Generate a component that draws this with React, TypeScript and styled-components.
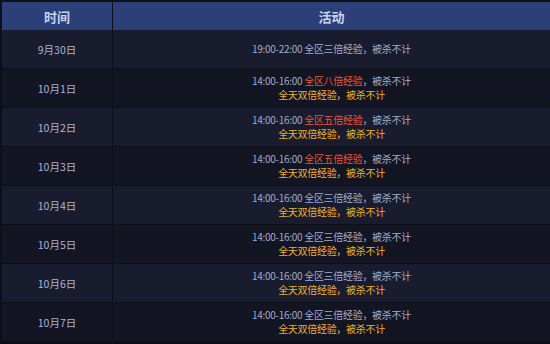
import React from 'react';
import styled, { createGlobalStyle } from 'styled-components';

interface IEvent {
  date: string;
  time: string;
  highlight: string;
  hot?: boolean;
  allDay?: boolean;
}

const EVENTS: IEvent[] = [
  { date: '9月30日', time: '19:00-22:00', highlight: '全区三倍经验' },
  { date: '10月1日', time: '14:00-16:00', highlight: '全区八倍经验', hot: true, allDay: true },
  { date: '10月2日', time: '14:00-16:00', highlight: '全区五倍经验', hot: true, allDay: true },
  { date: '10月3日', time: '14:00-16:00', highlight: '全区五倍经验', hot: true, allDay: true },
  { date: '10月4日', time: '14:00-16:00', highlight: '全区三倍经验', allDay: true },
  { date: '10月5日', time: '14:00-16:00', highlight: '全区三倍经验', allDay: true },
  { date: '10月6日', time: '14:00-16:00', highlight: '全区三倍经验', allDay: true },
  { date: '10月7日', time: '14:00-16:00', highlight: '全区三倍经验', allDay: true },
];

const GlobalStyle = createGlobalStyle`
  html, body {
    margin: 0;
    padding: 0;
    background: #0e1018;
    overflow: hidden;
  }
  body {
    font-family: "Noto Sans CJK SC", "Noto Sans", sans-serif;
  }
`;

const Table = styled.div`
  display: grid;
  grid-template-columns: 110px 1fr;
  column-gap: 1px;
  row-gap: 1px;

  width: 550px;
  padding: 2px 0 3px 2px;
  box-sizing: border-box;

  background: #0e1018;
`;

const HeadCell = styled.div`
  display: flex;
  align-items: center;
  justify-content: center;

  height: 28px;
  margin-bottom: -1px;

  background: #2b3f79;
  color: #c9d1f0;
  font-size: 13px;
  font-weight: 700;
`;

const Cell = styled.div<{ $even: boolean }>`
  display: flex;
  flex-direction: column;
  align-items: center;
  justify-content: center;

  height: 38px;

  background: ${({ $even }) => ($even ? '#191c2e' : '#131522')};
`;

const DateText = styled.span`
  color: #aab3d9;
  font-size: 10.5px;
`;

const Line = styled.div<{ $tone?: 'plain' | 'gold' }>`
  line-height: 14px;
  font-size: 10px;
  letter-spacing: -0.3px;
  color: ${({ $tone }) => ($tone === 'gold' ? '#f0b12c' : '#a4accb')};
  white-space: nowrap;
`;

const Hot = styled.span`
  color: #ea5638;
`;

const App: React.FC = () => (
  <>
    <GlobalStyle/>
    <Table>
      <HeadCell>时间</HeadCell>
      <HeadCell>活动</HeadCell>
      {
        EVENTS.map(({ date, time, highlight, hot, allDay }, i) => (
          <React.Fragment key={date}>
            <Cell $even={i % 2 === 0}>
              <DateText>{date}</DateText>
            </Cell>
            <Cell $even={i % 2 === 0}>
              <Line>
                {time} {hot ? <Hot>{highlight}</Hot> : highlight}，被杀不计
              </Line>
              {allDay && <Line $tone="gold">全天双倍经验，被杀不计</Line>}
            </Cell>
          </React.Fragment>
        ))
      }
    </Table>
  </>
);

export default App;
